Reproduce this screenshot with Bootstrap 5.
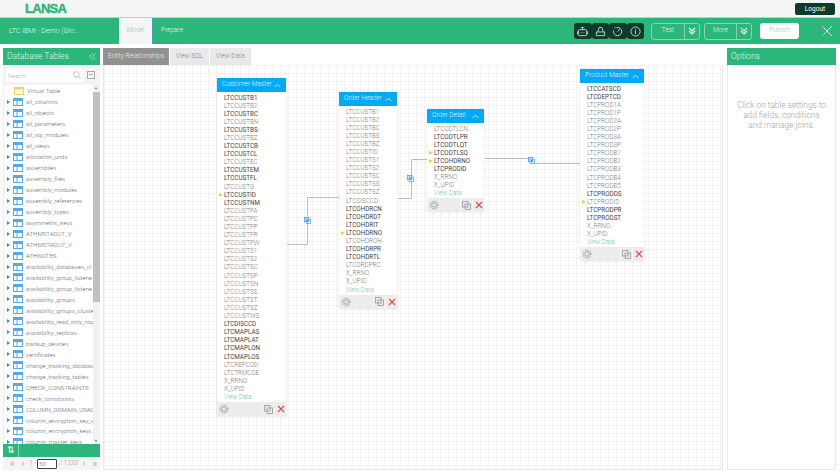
<!DOCTYPE html>
<html lang="en">
<head>
    <meta charset="UTF-8"/>
    <title>LANSA - Model</title>
    <link href="https://cdn.jsdelivr.net/npm/bootstrap@5.3.0/dist/css/bootstrap.min.css" rel="stylesheet"/>
    <style>
        html, body { height: 473px; overflow: hidden; }
        body { font-family: Roboto, "Liberation Sans", sans-serif; font-weight: 300; font-size: 7px; background: #fff; color: #555; }
        .top-strip { height: 17px; background: #f5f5f5; padding: 3px 5px 2px 25px; }
        .lansa-logo { font-family: "Liberation Sans", sans-serif; font-weight: 700; font-size: 13px; line-height: 12px; letter-spacing: -.7px; color: #2bb67b; -webkit-text-stroke: .4px #2bb67b; }
        .logout-btn { width: 40px; height: 12px; border-radius: 2px; background: #0f3b2c; color: #fff; font-size: 6.5px; line-height: 12px; text-align: center; font-weight: 400; }
        .green-bar { height: 27px; background: #2bb67b; color: #e8f7f0; border-top: 1px solid #a8dcc4; }
        .app-title { width: 118px; padding-left: 9px; font-size: 7px; }
        .bar-tab { height: 100%; font-size: 6.5px; border-left: 1px solid #4a9fc4; }
        .bar-tab.is-active { width: 34px; background: #f5f5f5; color: #7fcba8; border-left-color: #2bb67b; }
        .bar-tab.is-plain { width: 40px; border-right: 1px solid #4a9fc4; }
        .dark-group { width: 70px; height: 16px; margin-right: 7px; }
        .dark-cell { width: 17.5px; height: 16px; background: #0f3b2c; border-radius: 3px; }
        .ghost-group { height: 17px; border: 1px solid #8ad4b3; border-radius: 3px; font-size: 6.5px; margin-right: 4px; }
        .ghost-label { width: 33px; height: 100%; border-right: 1px solid #8ad4b3; }
        .ghost-label.is-more { width: 32px; }
        .ghost-arrow { width: 14px; }
        .publish-btn { width: 39px; height: 16px; background: #fff; border-radius: 3px; color: #8fd3b4; font-size: 6.5px; margin: 0 22px 0 4px; }
        .close-mark { width: 12px; height: 12px; margin-right: 7px; }
        .work-area { height: 429px; padding: 4px 4px 3px 3px; gap: 3px; }
        .side-panel { width: 97px; }
        .panel-head { height: 17px; background: #2bb67b; color: #e2f5ec; font-size: 8.5px; line-height: 17px; padding: 0 4px; }
        .side-search { height: 20px; background: #f4f4f4; padding: 3px; gap: 3px; }
        .search-box { width: 78px; height: 13px; background: #fff; padding: 0 3px 0 2px; font-size: 6px; color: #aaa; }
        .collapse-box { width: 8px; height: 8px; border: 1px solid #aaa; position: relative; }
        .collapse-box::after { content: ""; position: absolute; left: 1px; right: 1px; top: 2px; border-top: 1px solid #aaa; }
        .tree-wrap { height: 359px; overflow: hidden; border-left: 1px solid #eee; }
        .tree-list { width: 89px; overflow: hidden; }
        .tree-row { height: 10.97px; gap: 2px; padding-left: 3px; font-size: 6.1px; color: #666; white-space: nowrap; }
        .tree-row.is-virtual { padding-left: 10px; height: 11.5px; }
        .caret-right { width: 0; height: 0; border-left: 3px solid #1f8fd6; border-top: 2.5px solid transparent; border-bottom: 2.5px solid transparent; margin-right: 1px; flex: none; }
        .tree-row svg { flex: none; margin-right: 1px; }
        .side-scroll { width: 7px; background: #f1f1f1; position: relative; }
        .side-scroll-thumb { position: absolute; top: 7px; left: 0; right: 0; height: 210px; background: #c1c1c1; }
        .scroll-up, .scroll-down { position: absolute; left: 2px; width: 0; height: 0; border-left: 1.5px solid transparent; border-right: 1.5px solid transparent; }
        .scroll-up { top: 2px; border-bottom: 2px solid #666; }
        .scroll-down { bottom: 2px; border-top: 2px solid #666; }
        .side-foot { height: 13px; background: #2bb67b; color: #fff; font-size: 9px; font-weight: 400; }
        .foot-toggle { width: 16px; height: 100%; border-right: 1px solid #8ad4b3; }
        .page-strip { height: 13px; background: #f4f4f4; font-size: 6.5px; color: #999; padding-left: 7px; }
        .page-first { width: 12px; font-size: 10px; }
        .page-prev { width: 8px; font-size: 10px; }
        .page-from { width: 8px; }
        .page-input { width: 21px; height: 10px; background: #fff; border: 1px solid #444; border-radius: 1px; font-size: 6px; line-height: 8px; padding-left: 1px; color: #555; }
        .page-total { width: 22px; padding-left: 2px; }
        .page-next { width: 11px; font-size: 10px; text-align: center; }
        .center-panel { width: 620px; }
        .view-tabs { height: 17px; gap: 1px; }
        .view-tab { height: 17px; background: #e9e9e9; color: #888; font-size: 6.5px; padding: 0 6px; line-height: 17px; }
        .view-tab.is-active { background: #919191; color: #eee; padding: 0 5px; }
        .er-canvas { position: relative; height: 405px; border: 1px solid #e8e8e8; border-top-width: 0;
            background-color: #fff;
            background-image: linear-gradient(#f2f2f2 1px, transparent 1px), linear-gradient(90deg, #f2f2f2 1px, transparent 1px);
            background-size: 8px 8px; }
        .er-lines { position: absolute; left: 0; top: 0; }
        .er-node { position: absolute; background: #fff; box-shadow: 0 0 2px rgba(0,0,0,.14); }
        .er-head { height: 14px; background: #03a9f4; color: #e3f5fe; font-size: 6.5px; padding: 0 5px; }
        .er-fields { padding: 1.5px 0 0 7px; }
        .er-field { height: 8.1px; line-height: 8.1px; font-size: 6.3px; color: #7d7d7d; white-space: nowrap; position: relative; }
        .er-field.is-key { color: #444; font-weight: 400; }
        .er-field.is-link { color: #6fcaa0; }
        .er-field.is-joined::before { content: ""; position: absolute; left: -5px; top: 2px; width: 4px; height: 4px; background: #f7c948; clip-path: polygon(0 0, 100% 50%, 0 100%); }
        .er-foot { height: 14px; background: #ececec; margin-top: 1px; }
        .foot-cell { width: 12px; height: 100%; border-left: 1px solid #f6f6f6; }
        .join-mark { position: absolute; }
        .options-panel { width: 109px; margin-left: 1px; }
        .options-body { height: 405px; border: 1px solid #e8e8e8; border-top-width: 0; padding: 35px 0 0; text-align: center; color: #a3a3a3; font-size: 8.3px; line-height: 10px; }
    </style>
</head>
<body>

<!-- top strip -->
<div class="top-strip d-flex justify-content-between">
    <div class="lansa-logo">LANSA</div>
    <div class="logout-btn">Logout</div>
</div>

<!-- green toolbar -->
<div class="green-bar d-flex align-items-center">
    <div class="app-title">LTC IBMi - Demo (Glo...</div>
    <div class="bar-tab is-active d-flex align-items-center justify-content-center">Model</div>
    <div class="bar-tab is-plain d-flex align-items-center justify-content-center">Prepare</div>
    <div class="ms-auto d-flex align-items-center">
        <div class="dark-group d-flex">
            <div class="dark-cell d-flex align-items-center justify-content-center"><svg width="11" height="11" viewBox="0 0 12 12" fill="none" stroke="#cfe9dd" stroke-width=".9"><rect x="1.500" y="4" width="9" height="6.500" rx="1"/><path d="M6 1.500V4M4 1.500h4M.5 6v3M11.500 6v3M4 7h1M7 7h1"/></svg></div>
            <div class="dark-cell d-flex align-items-center justify-content-center"><svg width="11" height="11" viewBox="0 0 12 12" fill="none" stroke="#cfe9dd" stroke-width=".9"><path d="M1.500 10.500h9V6.500h-9zM3 6.500l1.500-5h3l1.500 5"/></svg></div>
            <div class="dark-cell d-flex align-items-center justify-content-center"><svg width="11" height="11" viewBox="0 0 12 12" fill="none" stroke="#cfe9dd" stroke-width=".9"><path d="M5 1.700A4.500 4.500 0 1 1 1.700 5M6 6l2.500-2.500M2.500 2.500L4 1"/></svg></div>
            <div class="dark-cell d-flex align-items-center justify-content-center"><svg width="11" height="11" viewBox="0 0 12 12" fill="none" stroke="#cfe9dd" stroke-width=".9"><circle cx="6" cy="6" r="5"/><path d="M6 5v4M6 3v1"/></svg></div>
        </div>
        <div class="ghost-group d-flex align-items-center">
            <div class="ghost-label d-flex align-items-center justify-content-center">Test</div>
            <div class="ghost-arrow d-flex justify-content-center"><svg width="8" height="8" viewBox="0 0 8 8" fill="none" stroke="#fff" stroke-width="1.2"><path d="M1 1l3 3 3-3M1 4l3 3 3-3"/></svg></div>
        </div>
        <div class="ghost-group d-flex align-items-center">
            <div class="ghost-label is-more d-flex align-items-center justify-content-center">More</div>
            <div class="ghost-arrow d-flex justify-content-center"><svg width="8" height="8" viewBox="0 0 8 8" fill="none" stroke="#fff" stroke-width="1.2"><path d="M1 1l3 3 3-3M1 4l3 3 3-3"/></svg></div>
        </div>
        <div class="publish-btn d-flex align-items-center justify-content-center">Publish</div>
        <svg class="close-mark" viewBox="0 0 12 12" stroke="#fff" stroke-width="1"><path d="M1 1l10 10M11 1L1 11"/></svg>
    </div>
</div>

<div class="work-area d-flex">
    <!-- database tables -->
    <div class="side-panel d-flex flex-column">
        <div class="panel-head d-flex justify-content-between align-items-center">
            <span>Database Tables</span>
            <svg width="7" height="7" viewBox="0 0 7 7" fill="none" stroke="#cfeee0" stroke-width=".7"><path d="M3.500 .5L.5 3.500l3 3M6.500 .5l-3 3 3 3"/></svg>
        </div>
        <div class="side-search d-flex align-items-center">
            <div class="search-box d-flex align-items-center justify-content-between">
                <span>Search</span>
                <svg width="8" height="8" viewBox="0 0 8 8" fill="none" stroke="#aaa" stroke-width=".7"><circle cx="3.400" cy="3.400" r="2.800"/><path d="M5.400 5.400L7.600 7.600"/></svg>
            </div>
            <div class="collapse-box"></div>
        </div>
        <div class="tree-wrap d-flex">
            <div class="tree-list" id="tree-list"></div>
            <div class="side-scroll"><span class="scroll-up"></span><div class="side-scroll-thumb"></div><span class="scroll-down"></span></div>
        </div>
        <div class="side-foot d-flex align-items-center">
            <div class="foot-toggle d-flex align-items-center justify-content-center">⇅</div>
        </div>
        <div class="page-strip d-flex align-items-center">
            <span class="page-first">«</span><span class="page-prev">‹</span><span class="page-from">1 -</span><div class="page-input">50</div><span class="page-total">/ 1220</span><span class="page-next">›</span><span class="page-next">»</span>
        </div>
    </div>

    <!-- ER canvas -->
    <div class="center-panel d-flex flex-column">
        <div class="view-tabs d-flex">
            <div class="view-tab is-active">Entity Relationships</div>
            <div class="view-tab">View SQL</div>
            <div class="view-tab">View Data</div>
        </div>
        <div class="er-canvas" id="er-canvas">
            <svg class="er-lines" width="620" height="405" fill="none" stroke="#bdbdbd" stroke-width="1">
                <path d="M183 179.500h20.500v-47h32.500"/>
                <path d="M294 133.500h13.500v-39h16.500"/>
                <path d="M381 93.500h46.500v5h49.500"/>
            </svg>
        </div>
    </div>

    <!-- options -->
    <div class="options-panel d-flex flex-column">
        <div class="panel-head">Options</div>
        <div class="options-body">Click on table settings to<br>add fields, conditions<br>and manage joins.</div>
    </div>
</div>

<script>
    const tableNames = ['all_columns','all_objects','all_parameters','all_sql_modules','all_views','allocation_units','assemblies','assembly_files','assembly_modules','assembly_references','assembly_types','asymmetric_keys','ATHMSTADUT_V','ATHMSTROUT_V','ATHNOTES','availability_databases_cl','availability_group_listene','availability_group_listene','availability_groups','availability_groups_cluste','availability_read_only_rou','availability_replicas','backup_devices','certificates','change_tracking_databas','change_tracking_tables','CHECK_CONSTRAINTS','check_constraints','COLUMN_DOMAIN_USAC','column_encryption_key_v','column_encryption_keys','column_master_keys'];

    const tableIcon = '<svg width="10" height="8" viewBox="0 0 10 8"><rect x=".5" y=".5" width="9" height="7" fill="#fff" stroke="#5aa9dc"/><rect x="1" y="1" width="8" height="2" fill="#5aa9dc"/><path d="M4 3v4" stroke="#5aa9dc"/></svg>';
    const folderIcon = '<svg width="10" height="8" viewBox="0 0 10 8"><rect x=".5" y=".5" width="9" height="7" fill="#fff8dc" stroke="#f3cf63"/><rect x="1" y="1" width="8" height="1" fill="#f3cf63"/></svg>';

    let treeHtml = '<div class="tree-row is-virtual d-flex align-items-center">' + folderIcon + '<span>Virtual Table</span></div>';
    tableNames.forEach(function (name) {
        treeHtml += '<div class="tree-row d-flex align-items-center"><span class="caret-right"></span>' + tableIcon + '<span>' + name + '</span></div>';
    });
    document.getElementById('tree-list').innerHTML = treeHtml;

    // * = darker key column, > = joined column
    const nodes = [
        { title: 'Customer Master', x: 113, y: 13, w: 69, fields: '*LTCCUSTB1 LTCCUSTB2 *LTCCUSTBC LTCCUSTBN *LTCCUSTBS LTCCUSTBZ *LTCCUSTCB *LTCCUSTCL LTCCUSTEC *LTCCUSTEM *LTCCUSTFL LTCCUSTG >*LTCCUSTID *LTCCUSTNM LTCCUSTPA LTCCUSTPC LTCCUSTPP LTCCUSTPR LTCCUSTPW LTCCUSTS1 LTCCUSTS2 LTCCUSTSC LTCCUSTSF LTCCUSTSN LTCCUSTSS LTCCUSTST LTCCUSTSZ LTCCUSTWS *LTCDISCCD *LTCMAPLAS *LTCMAPLAT *LTCMAPLON *LTCMAPLOS LTCREPCOD LTCTRMCDE X_RRNO X_UPID' },
        { title: 'Order Header', x: 235, y: 27, w: 58, fields: 'LTCCUSTB1 LTCCUSTB2 LTCCUSTBC LTCCUSTBS LTCCUSTBZ LTCCUSTID LTCCUSTS1 LTCCUSTS2 LTCCUSTSC LTCCUSTSS LTCCUSTSZ LTCDISCCD *LTCOHDRCN *LTCOHDRDT *LTCOHDRIT >*LTCOHDRNO LTCOHDROH *LTCOHDRPR *LTCOHDRTL LTCORDPRC X_RRNO X_UPID' },
        { title: 'Order Detail', x: 323, y: 44, w: 57, fields: 'LTCODTLCN *LTCODTLPR *LTCODTLQT >*LTCODTLSQ >*LTCOHDRNO *LTCPRODID X_RRNO X_UPID' },
        { title: 'Product Master', x: 476, y: 4, w: 64, fields: '*LTCCATSCD *LTCDEPTCD LTCPROD1A LTCPROD1P LTCPROD2A LTCPROD2P LTCPROD3A LTCPROD3P LTCPRODB1 LTCPRODB2 LTCPRODB3 LTCPRODB4 LTCPRODB5 *LTCPRODDS >LTCPRODID *LTCPRODPR *LTCPRODST X_RRNO X_UPID' }
    ];

    const gearIcon = '<svg width="10" height="10" viewBox="0 0 10 10" fill="none" stroke="#a9a9a9"><circle cx="5" cy="5" r="2.200"/><circle cx="5" cy="5" r="3.800" stroke-width="1.300" stroke-dasharray="1.300 .9"/></svg>';
    const copyIcon = '<svg width="9" height="9" viewBox="0 0 9 9" fill="none" stroke="#999" stroke-width=".8"><rect x=".5" y=".5" width="5.500" height="5.500"/><rect x="3" y="3" width="5.500" height="5.500"/></svg>';
    const crossIcon = '<svg width="8" height="8" viewBox="0 0 8 8" stroke="#e0483f" stroke-width="1.100"><path d="M1 1l6 6M7 1L1 7"/></svg>';
    const chevronUp = '<svg width="7" height="5" viewBox="0 0 7 5" fill="none" stroke="#e3f5fe" stroke-width=".9"><path d="M.7 4L3.500 1.200 6.300 4"/></svg>';

    const canvas = document.getElementById('er-canvas');
    nodes.forEach(function (node) {
        let rows = '';
        node.fields.split(' ').forEach(function (field) {
            let cls = 'er-field';
            if (field[0] === '>') { cls += ' is-joined'; field = field.slice(1); }
            if (field[0] === '*') { cls += ' is-key'; field = field.slice(1); }
            rows += '<div class="' + cls + '">' + field + '</div>';
        });
        rows += '<div class="er-field is-link">View Data</div>';
        canvas.insertAdjacentHTML('beforeend',
            '<div class="er-node" style="left:' + node.x + 'px;top:' + node.y + 'px;width:' + node.w + 'px">' +
            '<div class="er-head d-flex align-items-center justify-content-between"><span>' + node.title + '</span>' + chevronUp + '</div>' +
            '<div class="er-fields">' + rows + '</div>' +
            '<div class="er-foot d-flex align-items-center"><div class="foot-cell d-flex align-items-center justify-content-center">' + gearIcon + '</div>' +
            '<div class="foot-cell d-flex align-items-center justify-content-center ms-auto">' + copyIcon + '</div>' +
            '<div class="foot-cell d-flex align-items-center justify-content-center">' + crossIcon + '</div></div></div>');
    });

    // join markers sit on top of the connector lines
    [[200, 152], [303, 110], [424, 92]].forEach(function (p) {
        canvas.insertAdjacentHTML('beforeend',
            '<svg class="join-mark" style="left:' + p[0] + 'px;top:' + p[1] + 'px" width="7" height="7" viewBox="0 0 8 8"><rect x=".5" y=".5" width="5" height="5" fill="#cfeafc" stroke="#2f9be0" stroke-width=".8"/><rect x="2.500" y="2.500" width="5" height="5" fill="#fff" stroke="#2f9be0" stroke-width=".8"/><rect x="3.500" y="3.500" width="2" height="2" fill="#1f7fc4"/></svg>');
    });
</script>
<script src="https://cdn.jsdelivr.net/npm/bootstrap@5.3.0/dist/js/bootstrap.bundle.min.js"></script>
</body>
</html>
